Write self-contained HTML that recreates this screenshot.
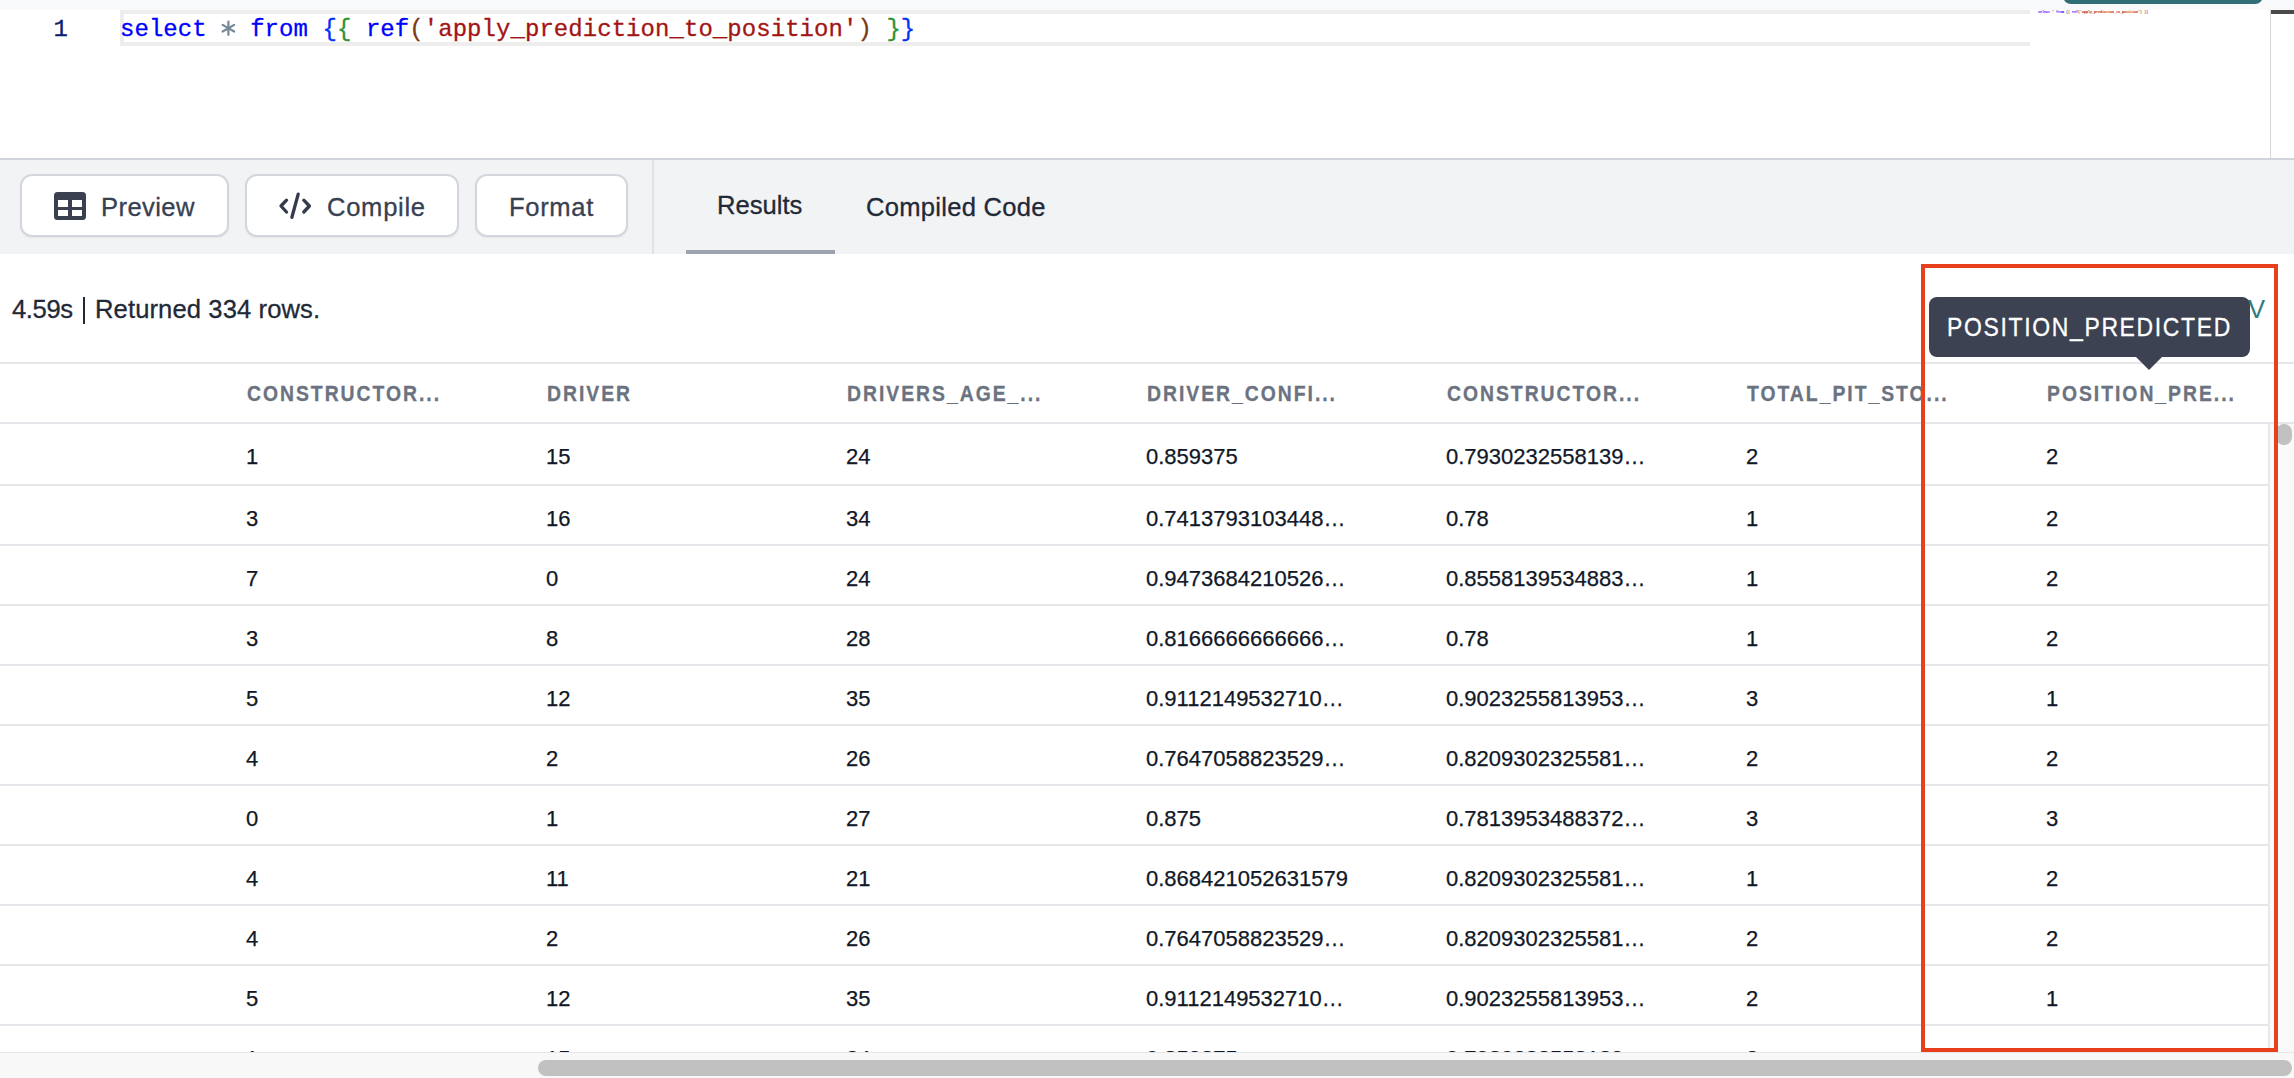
<!DOCTYPE html>
<html><head><meta charset="utf-8">
<style>
*{box-sizing:border-box;margin:0;padding:0}
html,body{width:2294px;height:1078px;overflow:hidden;background:#fff}
body{position:relative;font-family:"Liberation Sans",sans-serif}
.a{position:absolute}
.mono{font-family:"Liberation Mono",monospace}
#topstrip{left:0;top:0;width:2294px;height:10px;background:#f8f9fb}
#teal{left:2063px;top:-40px;width:200px;height:44px;border-radius:0 0 8px 8px;background:#2f6e75}
#curline{left:120px;top:10px;width:1910px;height:36px;border:4px solid #eeeeee;border-right-width:0}
#lnum{left:0;top:12px;width:68px;height:36px;line-height:36px;text-align:right;font-size:24px;color:#0b216f;-webkit-text-stroke:0.3px #0b216f}
#code{left:120px;top:12px;height:36px;line-height:36px;font-size:24px;letter-spacing:0.055px;white-space:pre;color:#000;-webkit-text-stroke:0.3px currentColor}
.kw{color:#0000ff}.op{color:transparent}.b1{color:#0431fa}.b2{color:#319331}.b3{color:#7b3814}.str{color:#a31515}
#vline{left:2270px;top:10px;width:1px;height:148px;background:#d6d6d6}
#vbar{left:2271px;top:10px;width:23px;height:4px;background:#4a4a4a}
#tbborder{left:0;top:158px;width:2294px;height:2px;background:#d1d5db}
#toolbar{left:0;top:160px;width:2294px;height:94px;background:#f2f3f5}
.btn{top:174px;height:63px;background:#fff;border:2px solid #d3d7dd;border-radius:12px;box-shadow:0 1px 2px rgba(0,0,0,0.06)}
.btxt{font-size:25.6px;color:#374151;line-height:30px;white-space:pre;top:192px;-webkit-text-stroke:0.3px #374151}
#divider{left:652px;top:160px;width:2px;height:94px;background:#dfe2e6}
#tabline{left:686px;top:250px;width:149px;height:4px;background:#9ca3af}
.tab{font-size:25.6px;color:#1f2937;line-height:30px;white-space:pre;-webkit-text-stroke:0.3px #1f2937}
#status{left:12px;top:294px;font-size:25.6px;line-height:30px;color:#1f2937;white-space:pre;letter-spacing:-0.4px;-webkit-text-stroke:0.3px #1f2937}
#status2{left:95px;top:294px;font-size:25.6px;line-height:30px;color:#1f2937;white-space:pre;letter-spacing:0.1px;-webkit-text-stroke:0.3px #1f2937}
.hl{left:0;width:2294px;height:2px;background:#e5e7eb}
.rl{left:0;width:2268px;height:2px;background:#e5e7eb}
.hd{font-size:22px;font-weight:700;color:#6b7280;line-height:30px;white-space:pre;top:379px;-webkit-text-stroke:0.3px #6b7280;letter-spacing:2.25px;transform:scaleX(0.88);transform-origin:0 0}
.cell{font-size:22px;color:#111827;line-height:30px;white-space:pre;-webkit-text-stroke:0.25px #111827}
#vtrack{left:2268px;top:424px;width:26px;height:628px;background:#f9f9f9;border-left:2px solid #e8e8e8}
#vthumb{left:2276px;top:424px;width:16px;height:21px;border-radius:8px;background:#c1c1c1}
#htrack{left:0;top:1052px;width:2294px;height:26px;background:#f8f8f8;border-top:1px solid #e6e6e6}
#hthumb{left:538px;top:1060px;width:1754px;height:16px;border-radius:8px;background:#c1c1c1}
#redbox{left:1921px;top:264px;width:357px;height:788px;border:4px solid #e8401c}
#tip{left:1929px;top:297px;width:321px;height:60px;border-radius:8px;background:#3c4252}
#tiparrow{left:2135px;top:356px;width:0;height:0;border-left:14px solid transparent;border-right:14px solid transparent;border-top:14px solid #3c4252}
#tiptxt{left:1947px;top:312px;font-size:25.5px;line-height:30px;color:#fff;white-space:pre;letter-spacing:1.85px;transform:scaleX(0.9);transform-origin:0 0;-webkit-text-stroke:0.3px #fff}
#csvv{left:2248px;top:294px;font-size:25.6px;line-height:30px;color:#2f7a7e;white-space:pre}
</style></head><body>
<div id="topstrip" class="a"></div>
<div id="teal" class="a"></div>
<div id="curline" class="a"></div>
<div id="lnum" class="a mono">1</div>
<div id="code" class="a mono"><span class="kw">select</span> <span class="op">*</span> <span class="kw">from</span> <span class="b1">{</span><span class="b2">{</span> <span class="kw">ref</span><span class="b3">(</span><span class="str">'apply_prediction_to_position'</span><span class="b3">)</span> <span class="b2">}</span><span class="b1">}</span></div>
<svg class="a" style="left:214px;top:18px" width="30" height="22" viewBox="214 18 30 22"><g stroke="#778899" stroke-width="2.2" stroke-linecap="round"><line x1="228.4" y1="21.6" x2="228.4" y2="34.8"/><line x1="222.6" y1="24.9" x2="234.2" y2="31.5"/><line x1="222.6" y1="31.5" x2="234.2" y2="24.9"/></g></svg>
<div class="a mono" style="left:2038px;top:8.5px;font-weight:700;font-size:3.33px;line-height:6px;white-space:pre;color:#000"><span class="kw">select</span> <span style="color:#778899">*</span> <span class="kw">from</span> <span class="b1">{</span><span class="b2">{</span> <span class="kw">ref</span><span class="b3">(</span><span class="str">'apply_prediction_to_position'</span><span class="b3">)</span> <span class="b2">}</span><span class="b1">}</span></div>
<div id="vline" class="a"></div>
<div id="vbar" class="a"></div>
<div id="tbborder" class="a"></div>
<div id="toolbar" class="a"></div>
<div class="a btn" style="left:20px;width:209px"></div>
<div class="a btn" style="left:245px;width:214px"></div>
<div class="a btn" style="left:475px;width:153px"></div>
<svg class="a" style="left:54px;top:192px" width="32" height="28" viewBox="0 0 32 28"><path fill="#3a4050" fill-rule="evenodd" d="M3.5 0H28.5A3.5 3.5 0 0 1 32 3.5V24.5A3.5 3.5 0 0 1 28.5 28H3.5A3.5 3.5 0 0 1 0 24.5V3.5A3.5 3.5 0 0 1 3.5 0ZM4 8V15H14V8ZM18 8V15H28V8ZM4 18V24H14V18ZM18 18V24H28V18Z"/></svg>
<div class="a btxt" style="left:101px;letter-spacing:0.4px">Preview</div>
<svg class="a" style="left:276px;top:190px" width="38" height="30" viewBox="276 190 38 30"><g fill="none" stroke="#343b4a" stroke-width="3.3" stroke-linecap="round" stroke-linejoin="round"><polyline points="286.5,200.2 281,206 286.5,212"/><polyline points="303.8,200.2 309.4,206 303.8,212"/><line x1="298.2" y1="194.1" x2="291.9" y2="217.3"/></g></svg>
<div class="a btxt" style="left:327px;letter-spacing:0.7px">Compile</div>
<div class="a btxt" style="left:509px;letter-spacing:0.65px">Format</div>
<div id="divider" class="a"></div>
<div id="tabline" class="a"></div>
<div class="a tab" style="left:717px;top:190px">Results</div>
<div class="a tab" style="left:866px;top:192px;letter-spacing:0.25px">Compiled Code</div>
<div id="status" class="a">4.59s</div><div class="a" style="left:83px;top:297px;width:2px;height:27px;background:#1f2937"></div><div id="status2" class="a">Returned 334 rows.</div>
<div id="csvv" class="a">V</div>
<div class="a hl" style="top:362px"></div>
<div class="a hl" style="top:422px"></div>
<div class="a cell" style="left:246px;top:442px">1</div>
<div class="a cell" style="left:546px;top:442px">15</div>
<div class="a cell" style="left:846px;top:442px">24</div>
<div class="a cell" style="left:1146px;top:442px">0.859375</div>
<div class="a cell" style="left:1446px;top:442px">0.7930232558139…</div>
<div class="a cell" style="left:1746px;top:442px">2</div>
<div class="a cell" style="left:2046px;top:442px">2</div>
<div class="a cell" style="left:246px;top:504px">3</div>
<div class="a cell" style="left:546px;top:504px">16</div>
<div class="a cell" style="left:846px;top:504px">34</div>
<div class="a cell" style="left:1146px;top:504px">0.7413793103448…</div>
<div class="a cell" style="left:1446px;top:504px">0.78</div>
<div class="a cell" style="left:1746px;top:504px">1</div>
<div class="a cell" style="left:2046px;top:504px">2</div>
<div class="a cell" style="left:246px;top:564px">7</div>
<div class="a cell" style="left:546px;top:564px">0</div>
<div class="a cell" style="left:846px;top:564px">24</div>
<div class="a cell" style="left:1146px;top:564px">0.9473684210526…</div>
<div class="a cell" style="left:1446px;top:564px">0.8558139534883…</div>
<div class="a cell" style="left:1746px;top:564px">1</div>
<div class="a cell" style="left:2046px;top:564px">2</div>
<div class="a cell" style="left:246px;top:624px">3</div>
<div class="a cell" style="left:546px;top:624px">8</div>
<div class="a cell" style="left:846px;top:624px">28</div>
<div class="a cell" style="left:1146px;top:624px">0.8166666666666…</div>
<div class="a cell" style="left:1446px;top:624px">0.78</div>
<div class="a cell" style="left:1746px;top:624px">1</div>
<div class="a cell" style="left:2046px;top:624px">2</div>
<div class="a cell" style="left:246px;top:684px">5</div>
<div class="a cell" style="left:546px;top:684px">12</div>
<div class="a cell" style="left:846px;top:684px">35</div>
<div class="a cell" style="left:1146px;top:684px">0.9112149532710…</div>
<div class="a cell" style="left:1446px;top:684px">0.9023255813953…</div>
<div class="a cell" style="left:1746px;top:684px">3</div>
<div class="a cell" style="left:2046px;top:684px">1</div>
<div class="a cell" style="left:246px;top:744px">4</div>
<div class="a cell" style="left:546px;top:744px">2</div>
<div class="a cell" style="left:846px;top:744px">26</div>
<div class="a cell" style="left:1146px;top:744px">0.7647058823529…</div>
<div class="a cell" style="left:1446px;top:744px">0.8209302325581…</div>
<div class="a cell" style="left:1746px;top:744px">2</div>
<div class="a cell" style="left:2046px;top:744px">2</div>
<div class="a cell" style="left:246px;top:804px">0</div>
<div class="a cell" style="left:546px;top:804px">1</div>
<div class="a cell" style="left:846px;top:804px">27</div>
<div class="a cell" style="left:1146px;top:804px">0.875</div>
<div class="a cell" style="left:1446px;top:804px">0.7813953488372…</div>
<div class="a cell" style="left:1746px;top:804px">3</div>
<div class="a cell" style="left:2046px;top:804px">3</div>
<div class="a cell" style="left:246px;top:864px">4</div>
<div class="a cell" style="left:546px;top:864px">11</div>
<div class="a cell" style="left:846px;top:864px">21</div>
<div class="a cell" style="left:1146px;top:864px">0.868421052631579</div>
<div class="a cell" style="left:1446px;top:864px">0.8209302325581…</div>
<div class="a cell" style="left:1746px;top:864px">1</div>
<div class="a cell" style="left:2046px;top:864px">2</div>
<div class="a cell" style="left:246px;top:924px">4</div>
<div class="a cell" style="left:546px;top:924px">2</div>
<div class="a cell" style="left:846px;top:924px">26</div>
<div class="a cell" style="left:1146px;top:924px">0.7647058823529…</div>
<div class="a cell" style="left:1446px;top:924px">0.8209302325581…</div>
<div class="a cell" style="left:1746px;top:924px">2</div>
<div class="a cell" style="left:2046px;top:924px">2</div>
<div class="a cell" style="left:246px;top:984px">5</div>
<div class="a cell" style="left:546px;top:984px">12</div>
<div class="a cell" style="left:846px;top:984px">35</div>
<div class="a cell" style="left:1146px;top:984px">0.9112149532710…</div>
<div class="a cell" style="left:1446px;top:984px">0.9023255813953…</div>
<div class="a cell" style="left:1746px;top:984px">2</div>
<div class="a cell" style="left:2046px;top:984px">1</div>
<div class="a cell" style="left:246px;top:1044px">1</div>
<div class="a cell" style="left:546px;top:1044px">15</div>
<div class="a cell" style="left:846px;top:1044px">24</div>
<div class="a cell" style="left:1146px;top:1044px">0.859375</div>
<div class="a cell" style="left:1446px;top:1044px">0.7930232558139…</div>
<div class="a cell" style="left:1746px;top:1044px">2</div>
<div class="a cell" style="left:2046px;top:1044px">2</div>
<div class="a rl" style="top:484px"></div>
<div class="a rl" style="top:544px"></div>
<div class="a rl" style="top:604px"></div>
<div class="a rl" style="top:664px"></div>
<div class="a rl" style="top:724px"></div>
<div class="a rl" style="top:784px"></div>
<div class="a rl" style="top:844px"></div>
<div class="a rl" style="top:904px"></div>
<div class="a rl" style="top:964px"></div>
<div class="a rl" style="top:1024px"></div>
<div class="a hd" style="left:246.5px">CONSTRUCTOR...</div>
<div class="a hd" style="left:546.5px">DRIVER</div>
<div class="a hd" style="left:846.5px">DRIVERS_AGE_...</div>
<div class="a hd" style="left:1146.5px">DRIVER_CONFI...</div>
<div class="a hd" style="left:1446.5px">CONSTRUCTOR...</div>
<div class="a hd" style="left:1746.5px">TOTAL_PIT_STO...</div>
<div class="a hd" style="left:2046.5px">POSITION_PRE...</div>
<div id="vtrack" class="a"></div>
<div id="vthumb" class="a"></div>
<div id="htrack" class="a"></div>
<div id="hthumb" class="a"></div>
<div id="redbox" class="a"></div>
<div id="tip" class="a"></div>
<div id="tiparrow" class="a"></div>
<div id="tiptxt" class="a">POSITION_PREDICTED</div>
</body></html>
